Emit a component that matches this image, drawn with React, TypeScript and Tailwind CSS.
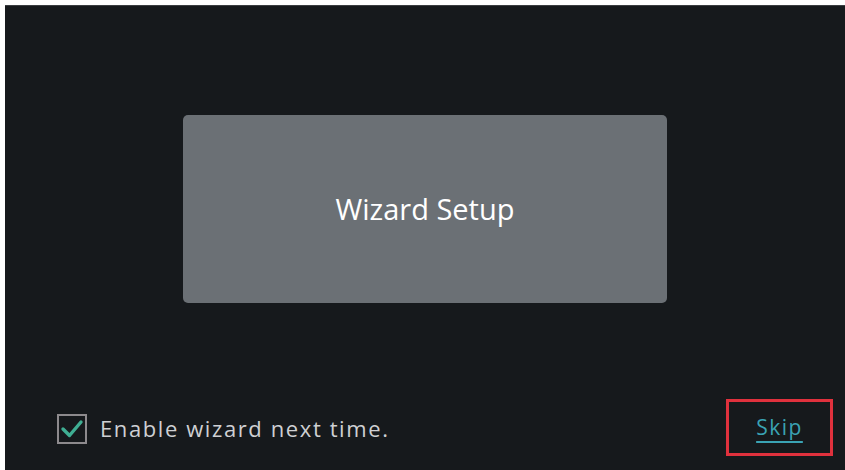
import React from 'react';

const font = { fontFamily: '"Open Sans", "Noto Sans", "DejaVu Sans", sans-serif' };

const CheckBox: React.FC<{ checked: boolean }> = ({ checked }) => (
  <div className="w-[30px] h-[30px] border-2 border-[#8d8a8d] flex items-center justify-center">
    {checked && (
      <svg width="26" height="22" viewBox="0 0 26 22" fill="none">
        <path
          d="M4 11 L10.5 17.5 L22 4"
          stroke="#3fae93"
          strokeWidth="3.4"
          strokeLinecap="round"
          strokeLinejoin="round"
        />
      </svg>
    )}
  </div>
);

export default function App() {
  return (
    <div className="w-[845px] h-[470px] bg-white pt-[5px] pl-[5px] overflow-hidden" style={font}>
      <div className="h-full flex flex-col bg-[#16191c] border-t border-[#3a3d40]">
        <div className="pt-[109px] pl-[178px]">
          <button className="w-[484px] h-[188px] rounded-[5px] bg-[#6b7075] flex items-center justify-center text-white text-[29px]">
            Wizard Setup
          </button>
        </div>

        <div className="mt-auto flex items-center justify-between pl-[52px] pr-[12px] pb-[14px]">
          <label className="flex items-center gap-[13px] mt-[2px]">
            <CheckBox checked />
            <span className="text-[22px] font-medium text-[#cfd0d3] tracking-[1.6px]">Enable wizard next time.</span>
          </label>
          <div className="w-[107px] h-[57px] border-[3px] border-[#e0313d] flex items-center justify-center">
            <span className="text-[21px] text-[#3aa3b4] tracking-[1.5px] underline underline-offset-[6px] decoration-2">
              Skip
            </span>
          </div>
        </div>
      </div>
    </div>
  );
}
